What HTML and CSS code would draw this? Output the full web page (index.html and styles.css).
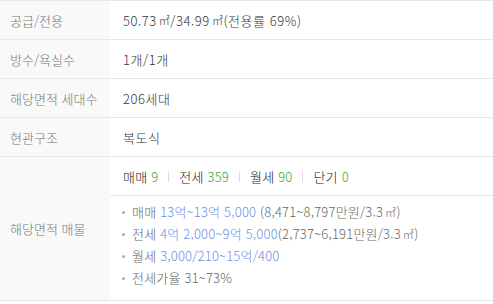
FILE: index.html
```html
<!DOCTYPE html>
<html lang="ko">
<head>
<meta charset="utf-8">
<link rel="stylesheet" href="styles.css">
</head>
<body>
<div class="table">
  <div class="row">
    <div class="th">공급/전용</div>
    <div class="td">50.73<span class="unit">㎡</span>/34.99<span class="unit">㎡</span>(전용률 69%)</div>
  </div>
  <div class="row">
    <div class="th">방수/욕실수</div>
    <div class="td">1개/1개</div>
  </div>
  <div class="row">
    <div class="th">해당면적 세대수</div>
    <div class="td">206세대</div>
  </div>
  <div class="row">
    <div class="th">현관구조</div>
    <div class="td">복도식</div>
  </div>
  <div class="row big">
    <div class="th">해당면적 매물</div>
    <div class="tdwrap">
      <div class="counts">
        <span class="cnt">매매 <em>9</em></span>
        <span class="sep"></span>
        <span class="cnt">전세 <em>359</em></span>
        <span class="sep"></span>
        <span class="cnt">월세 <em>90</em></span>
        <span class="sep"></span>
        <span class="cnt">단기 <em>0</em></span>
      </div>
      <ul class="prices">
        <li>매매 <b>13억~13억 5,000</b> (8,471~8,797만원/3.3<span class="unit">㎡</span>)</li>
        <li>전세 <b>4억 2,000~9억 5,000</b>(2,737~6,191만원/3.3<span class="unit">㎡</span>)</li>
        <li>월세 <b>3,000/210~15억/400</b></li>
        <li>전세가율 31~73%</li>
      </ul>
    </div>
  </div>
</div>
</body>
</html>
```
FILE: styles.css
```css
* { box-sizing: border-box; margin: 0; padding: 0; }
body {
  background: #fff;
  font-family: "Noto Sans CJK KR", "Noto Sans", sans-serif;
  font-size: 13px;
  font-weight: 300;
  color: #333;
}
.table { border-top: 1px solid #e8e8e8; width: 493px; }
.row {
  display: flex;
  border-bottom: 1px solid #e8e8e8;
  min-height: 39px;
}
.th {
  width: 110px;
  flex: none;
  background: #f9f9f9;
  color: #777;
  padding-left: 10px;
  display: flex;
  align-items: center;
}
.td {
  flex: 1;
  display: flex;
  align-items: center;
  padding-left: 13px;
  color: #333;
  letter-spacing: 0.55px;
}
.unit { font-size: 11px; margin: 0 1px 0 2px; letter-spacing: -0.5px; }
.tdwrap { flex: 1; }
.counts {
  height: 39px;
  border-bottom: 1px solid #e8e8e8;
  display: flex;
  align-items: center;
  padding-left: 13px;
  gap: 10px;
  color: #222;
  letter-spacing: 0.2px;
}
.counts em { font-style: normal; color: #33a833; }
.sep { width: 1px; height: 11px; background: #ddd; }
.prices {
  list-style: none;
  padding: 5px 0 11px 12px;
  color: #666;
}
.prices li {
  line-height: 22px;
  position: relative;
  padding-left: 10px;
  letter-spacing: 0.2px;
}
.prices li::before {
  content: "";
  position: absolute;
  left: 0;
  top: 10px;
  width: 3px;
  height: 3px;
  border-radius: 50%;
  background: #aaa;
}
.prices b { font-weight: 300; color: #6a8fe3; }
```
